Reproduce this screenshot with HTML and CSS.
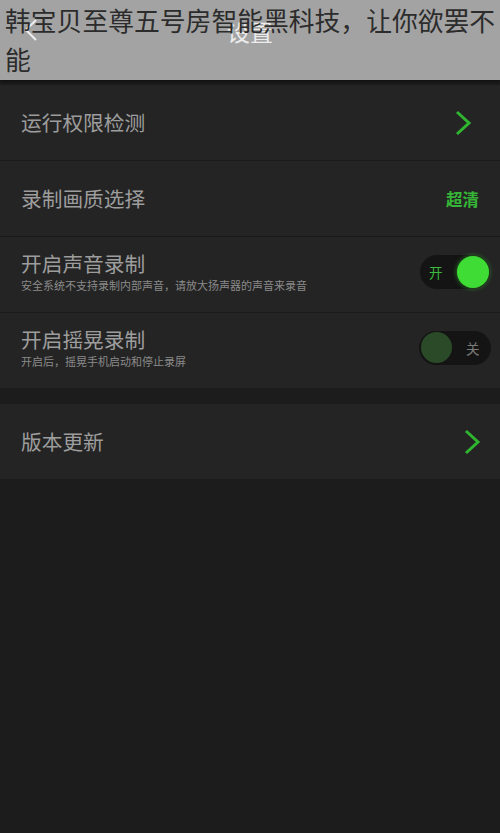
FILE: index.html
```html
<!DOCTYPE html>
<html lang="zh-CN">
<head>
<meta charset="utf-8">
<title>设置</title>
<link rel="stylesheet" href="styles.css">
</head>
<body>
<div class="page">
  <header class="topbar">
    <div class="nav">
      <svg class="back" width="16" height="24" viewBox="0 0 16 24"><path d="M13 2 L3 12 L13 22" fill="none" stroke="#eeeeee" stroke-width="2"/></svg>
      <span class="nav-title">设置</span>
    </div>
    <h1 class="caption">韩宝贝至尊五号房智能黑科技，让你欲罢不能</h1>
  </header>

  <section class="group">
    <div class="row">
      <span class="label">运行权限检测</span>
      <svg class="chev chev-1" width="20" height="26" viewBox="0 0 20 26"><path d="M3 2 L15 13 L3 24" fill="none" stroke="#2fb52f" stroke-width="3"/></svg>
    </div>
    <div class="row">
      <span class="label">录制画质选择</span>
      <span class="value">超清</span>
    </div>
    <div class="row">
      <div class="text">
        <span class="label">开启声音录制</span>
        <span class="sub">安全系统不支持录制内部声音，请放大扬声器的声音来录音</span>
      </div>
      <div class="switch on"><span class="sw-text">开</span><span class="knob"></span></div>
    </div>
    <div class="row">
      <div class="text">
        <span class="label">开启摇晃录制</span>
        <span class="sub">开启后，摇晃手机启动和停止录屏</span>
      </div>
      <div class="switch off"><span class="knob"></span><span class="sw-text">关</span></div>
    </div>
  </section>

  <section class="group second">
    <div class="row">
      <span class="label">版本更新</span>
      <svg class="chev chev-2" width="20" height="26" viewBox="0 0 20 26"><path d="M3 2 L15 13 L3 24" fill="none" stroke="#2fb52f" stroke-width="3"/></svg>
    </div>
  </section>
</div>
</body>
</html>
```

FILE: styles.css
```css
html, body {
  margin: 0;
  padding: 0;
  background: #1c1c1c;
}
body {
  width: 500px;
  height: 833px;
  overflow: hidden;
  font-family: "Noto Sans CJK SC", "Noto Sans", sans-serif;
}
.page {
  display: flex;
  flex-direction: column;
}
.topbar {
  position: relative;
  height: 80px;
  background: #a3a3a3;
  box-shadow: 0 2px 3px rgba(0,0,0,0.4);
}
.nav {
  height: 60px;
  display: flex;
  align-items: center;
  justify-content: center;
  position: relative;
}
.back {
  position: absolute;
  left: 23px;
  top: 18px;
}
.nav-title {
  font-size: 23px;
  color: #ececec;
  line-height: 1;
  margin-top: 2px;
}
.caption {
  position: absolute;
  left: 5px;
  top: 0;
  right: 0;
  margin: 0;
  font-size: 25.8px;
  line-height: 39px;
  font-weight: normal;
  color: #2c2c2c;
  letter-spacing: 0;
}
.group {
  margin-top: 5px;
  background: #1a1a1a;
  display: flex;
  flex-direction: column;
}
.group.second {
  margin-top: 16px;
}
.row {
  height: 75px;
  background: #242424;
  display: flex;
  align-items: center;
  justify-content: space-between;
  padding-left: 21px;
  padding-right: 10px;
}
.row + .row {
  border-top: 1px solid #1a1a1a;
}
.label {
  font-size: 20.7px;
  color: #9d9d9d;
  line-height: 1.2;
}
.text {
  display: flex;
  flex-direction: column;
  margin-top: -6px;
}
.sub {
  font-size: 11px;
  color: #8a8a8a;
  line-height: 1.3;
  margin-top: 2px;
}
.chev-1 {
  margin-right: 16px;
}
.chev-2 {
  margin-right: 7px;
}
.value {
  font-size: 16.5px;
  color: #36b536;
  font-weight: bold;
  margin-right: 11px;
}
.switch {
  width: 70px;
  height: 34px;
  border-radius: 17px;
  background: #141414;
  display: flex;
  align-items: center;
  box-sizing: border-box;
  margin-top: -6px;
}
.switch.on {
  justify-content: space-between;
  padding-left: 9px;
  padding-right: 1px;
}
.switch.off {
  width: 72px;
  padding-left: 2px;
  margin-right: -1px;
}
.knob {
  width: 32px;
  height: 32px;
  border-radius: 50%;
}
.switch.on .knob {
  background: #3fdc35;
  box-shadow: 0 0 5px rgba(63,220,53,0.55);
}
.switch.off .knob {
  width: 31px;
  height: 31px;
  background: #2a4a28;
}
.switch.on .sw-text {
  font-size: 13.5px;
  color: #3cb83c;
}
.switch.off .sw-text {
  font-size: 13.5px;
  color: #7a7a7a;
  margin-left: 14px;
}
```
